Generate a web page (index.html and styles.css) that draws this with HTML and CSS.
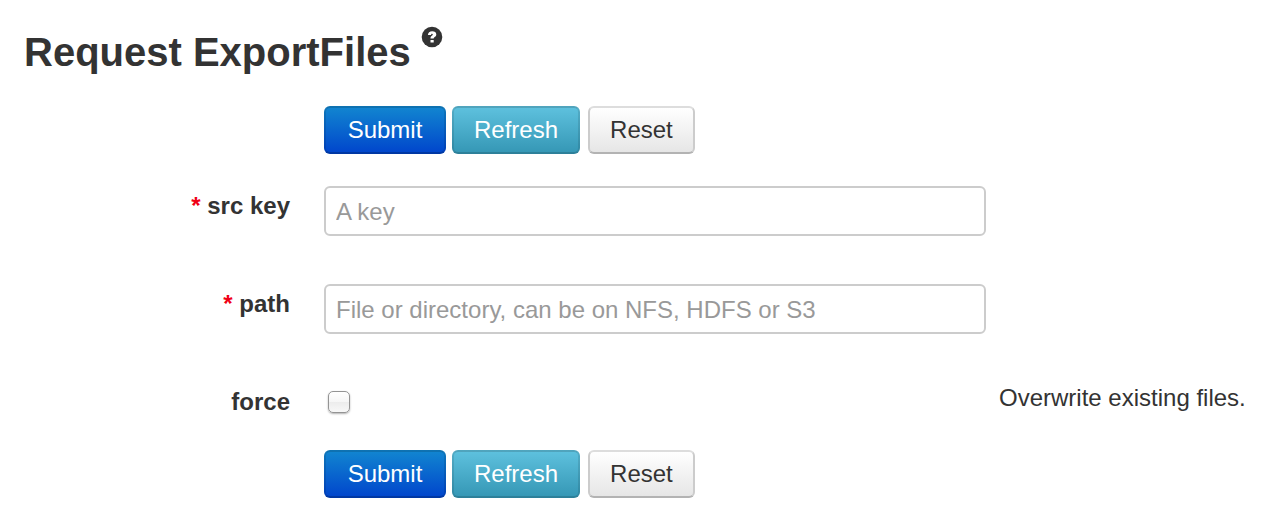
FILE: index.html
```html
<!DOCTYPE html>
<html lang="en">
<head>
<meta charset="utf-8">
<title>Request ExportFiles</title>
<link rel="stylesheet" href="styles.css">
</head>
<body>
<main class="page">
  <header class="heading">
    <h1 class="title">Request ExportFiles</h1>
    <a class="help" href="#" aria-label="Help">
      <svg class="help-icon" viewBox="0 0 22 22" aria-hidden="true">
        <circle cx="11" cy="11" r="10.3" fill="#333"/>
        <path d="M6.9 9.1C7 6.5 8.7 5.2 11.2 5.2c2.5 0 4.1 1.2 4.1 3.2 0 2.3-2.6 2.5-2.6 4.1H9.5c0-2.6 2.3-2.7 2.3-3.9 0-.6-.3-.8-.8-.8-.6 0-.9.5-.9 1.3zM9.5 13.9h3.2v2.7H9.5z" fill="#fff"/>
      </svg>
    </a>
  </header>
  <form class="form">
    <div class="actions">
      <button class="btn primary" type="submit">Submit</button>
      <button class="btn info" type="button">Refresh</button>
      <button class="btn plain" type="reset">Reset</button>
    </div>
    <div class="row">
      <label class="label" for="src-key"><span class="required">*</span> src key</label>
      <input class="field" id="src-key" type="text" placeholder="A key">
    </div>
    <div class="row">
      <label class="label" for="path"><span class="required">*</span> path</label>
      <input class="field" id="path" type="text" placeholder="File or directory, can be on NFS, HDFS or S3">
    </div>
    <div class="row short">
      <label class="label" for="force">force</label>
      <div class="control"><input class="check" id="force" type="checkbox" aria-describedby="force-help"></div>
      <p class="note" id="force-help">Overwrite existing files.</p>
    </div>
    <div class="actions">
      <button class="btn primary" type="submit">Submit</button>
      <button class="btn info" type="button">Refresh</button>
      <button class="btn plain" type="reset">Reset</button>
    </div>
  </form>
</main>
</body>
</html>
```
FILE: styles.css
```css
* {
  box-sizing: border-box;
}

body {
  margin: 0;
  background: #fff;
  color: #333;
  font: 24px/32px "Liberation Sans", Arial, sans-serif;
}

.page {
  padding: 24px 24px 26px;
}

.heading {
  display: flex;
  align-items: flex-start;
  gap: 10px;
  margin-bottom: 26px;
}

.title {
  margin: 0;
  font-size: 40px;
  line-height: 56px;
}

.help {
  display: block;
  padding-top: 2px;
}

.help-icon {
  display: block;
  width: 22px;
  height: 22px;
}

.actions {
  display: flex;
  gap: 6px;
  padding-left: 300px;
  margin-bottom: 32px;
}

.actions:last-child {
  margin-bottom: 0;
}

.btn {
  height: 48px;
  padding: 0 20px;
  border: 2px solid;
  border-radius: 6px;
  font: inherit;
  cursor: pointer;
}

.primary {
  min-width: 122px;
  color: #fff;
  background: linear-gradient(#1287d0, #04c) border-box;
  border-color: rgba(0, 0, 0, 0.15) rgba(0, 0, 0, 0.1) rgba(0, 0, 0, 0.2);
}

.info {
  color: #fff;
  background: linear-gradient(#5fc2df, #3496b4) border-box;
  border-color: rgba(0, 0, 0, 0.15) rgba(0, 0, 0, 0.1) rgba(0, 0, 0, 0.15);
}

.plain {
  margin-left: 2px;
  color: #333;
  background: linear-gradient(#fff, #e6e6e6);
  border-color: #ddd #ccc #b3b3b3;
}

.row {
  display: grid;
  grid-template-columns: 266px minmax(0, 696px) minmax(261px, 1fr);
  align-items: start;
  margin-bottom: 48px;
}

.row.short {
  margin-bottom: 32px;
}

.label {
  padding-top: 4px;
  text-align: right;
  font-weight: bold;
}

.required {
  color: #f00016;
}

.field,
.control {
  margin-left: 34px;
}

.field {
  height: 50px;
  padding: 2px 10px 0;
  border: 2px solid #ccc;
  border-radius: 6px;
  background: #fff;
  color: #555;
  font: inherit;
}

.field::placeholder {
  color: #999;
  opacity: 1;
}

.check {
  display: block;
  appearance: none;
  width: 22px;
  height: 22px;
  margin: 9px 0 1px 4px;
  border: 1px solid #949494;
  border-radius: 5px;
  background: linear-gradient(#fff, #f6f6f6 50%, #ececec 50%, #f8f8f8);
  box-shadow: 0 1px 2px rgba(0, 0, 0, 0.3);
}

.check:checked {
  background: #0074cc;
}

.note {
  margin: 0;
  padding-left: 13px;
  white-space: nowrap;
}
```
